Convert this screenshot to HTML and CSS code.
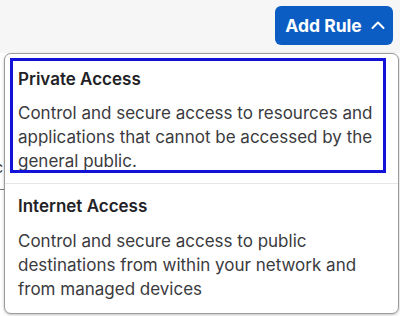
FILE: index.html
```html
<!DOCTYPE html>
<html>
<head>
<meta charset="utf-8">
<link rel="stylesheet" href="styles.css">
</head>
<body>
<div class="page">
  <div class="topbar">
    <button class="add-btn">Add Rule
      <svg class="chev" width="14" height="10" viewBox="0 0 14 10"><path d="M1.5 8 L7 2.5 L12.5 8" fill="none" stroke="#fff" stroke-width="2" stroke-linecap="round" stroke-linejoin="round"/></svg>
    </button>
  </div>
  <div class="behind">
    <div class="behind-row"><span class="frag">c</span></div>
    <div class="behind-line"></div>
  </div>
  <div class="menu">
    <div class="item focused">
      <div class="item-title">Private Access</div>
      <div class="item-desc">Control and secure access to resources and applications that cannot be accessed by the general public.</div>
    </div>
    <div class="item second">
      <div class="item-title">Internet Access</div>
      <div class="item-desc">Control and secure access to public destinations from within your network and from managed devices</div>
    </div>
  </div>
</div>
</body>
</html>
```
FILE: styles.css
```css
* { box-sizing: border-box; }
html, body { margin: 0; padding: 0; }
body {
  width: 400px;
  height: 316px;
  overflow: hidden;
  background: #ffffff;
  font-family: Inter, "Noto Sans", sans-serif;
}
.page { position: relative; width: 400px; height: 316px; }
.topbar {
  height: 53px;
  background: #f6f6f6;
  display: flex;
  justify-content: flex-end;
  align-items: flex-start;
  padding: 6px 7px 0 0;
}
.add-btn {
  width: 118px;
  height: 39px;
  background: #0b5dc3;
  border: none;
  border-radius: 6px;
  color: #fff;
  font-family: Inter, sans-serif;
  font-weight: 700;
  font-size: 17.5px;
  display: flex;
  align-items: center;
  justify-content: center;
  gap: 9px;
  padding: 0 0 1px 2px;
}
.chev { display: block; margin-top: -1px; }
.behind { padding-top: 104px; }
.behind-row { height: 20px; font-size: 16px; color: #333; line-height: 20px; }
.frag { margin-left: -6px; }
.behind-line { margin-top: 12px; height: 1px; width: 40px; background: #777; }
.menu {
  position: absolute;
  top: 53px;
  left: 4px;
  width: 395px;
  background: #fff;
  border: 1px solid #9b9b9b;
  border-radius: 7px;
  box-shadow: 0 1px 3px rgba(0,0,0,0.25);
}
.item {
  position: relative;
  padding: 13px 14px 10px 13px;
  color: #3a3a3e;
}
.item.second {
  border-top: 1px solid #e6e6e6;
  padding: 10px 14px 12px 13px;
}
.item.second .item-title { margin-bottom: 11px; }
.item.focused::after {
  content: "";
  position: absolute;
  top: 4px;
  left: 5px;
  right: 12px;
  bottom: 10px;
  border: 3px solid #1212d8;
}
.item-title {
  font-weight: 600;
  font-size: 17px;
  line-height: 24px;
  color: #222226;
  margin-bottom: 10px;
}
.item-desc {
  font-size: 17px;
  line-height: 24px;
}
```
